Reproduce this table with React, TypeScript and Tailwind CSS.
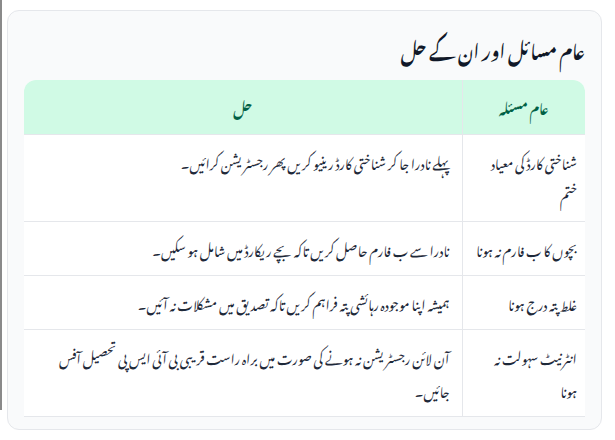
import React from "react";

const rows: [string[], string][] = [
  [["شناختی کارڈ کی معیاد", "ختم"], "پہلے نادرا جا کر شناختی کارڈ رینیو کریں پھر رجسٹریشن کرائیں۔"],
  [["بچوں کا ب فارم نہ ہونا"], "نادرا سے ب فارم حاصل کریں تاکہ بچے ریکارڈ میں شامل ہو سکیں۔"],
  [["غلط پتہ درج ہونا"], "ہمیشہ اپنا موجودہ رہائشی پتہ فراہم کریں تاکہ تصدیق میں مشکلات نہ آئیں۔"],
  [["انٹرنیٹ سہولت نہ", "ہونا"], "آن لائن رجسٹریشن نہ ہونے کی صورت میں براہ راست قریبی بی آئی ایس پی تحصیل آفس جائیں۔"],
];

export default function App() {
  return (
    <div className="flex w-[615px] h-[440px] bg-white overflow-hidden font-['Noto_Nastaliq_Urdu','Jameel_Noori_Nastaleeq','Noto_Sans_Arabic','DejaVu_Sans',sans-serif]">
      <div className="w-[2px] h-[410px] bg-[#8a8a8a] shrink-0" />
      <div
        dir="rtl"
        className="ml-[5px] mt-[10px] w-[595px] h-[420px] rounded-xl border border-gray-200 bg-gray-50 px-[16px] pt-[18px]"
      >
        <h2 className="text-[18px] leading-[40px] font-bold text-gray-900 mb-[11px]">
          عام مسائل اور ان کے حل
        </h2>
        <div className="rounded-t-xl overflow-hidden border-b border-gray-200">
          <table className="w-full table-fixed border-collapse bg-white text-[13.25px] text-gray-800">
            <thead>
              <tr className="bg-emerald-100 text-emerald-800">
                <th className="w-[123px] h-[54px] border-l border-gray-200 font-bold text-center">عام مسئلہ</th>
                <th className="h-[54px] font-bold text-center">حل</th>
              </tr>
            </thead>
            <tbody>
              {rows.map(([a, b], i) => (
                <tr key={i} className="border-t border-gray-200">
                  <td className="align-top px-2 py-[10px] leading-[33px] border-l border-gray-200 text-right whitespace-nowrap">
                    {a.map((line, j) => (
                      <div key={j}>{line}</div>
                    ))}
                  </td>
                  <td className="align-top px-3 py-[10px] leading-[33px] text-right">{b}</td>
                </tr>
              ))}
            </tbody>
          </table>
        </div>
      </div>
    </div>
  );
}
